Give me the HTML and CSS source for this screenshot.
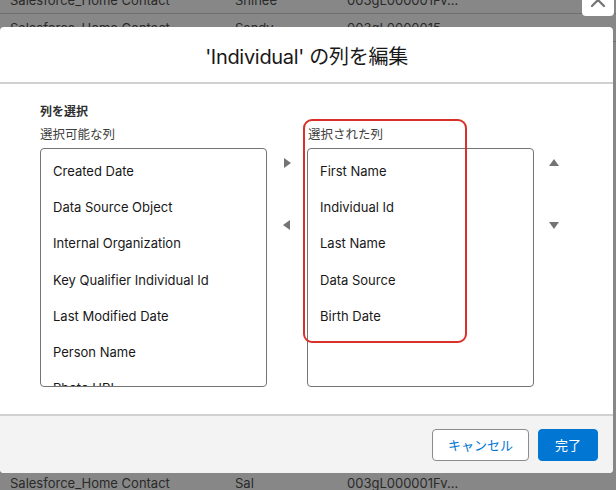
FILE: index.html
```html
<!DOCTYPE html>
<html lang="ja">
<head>
<meta charset="utf-8">
<title>Edit columns</title>
<link rel="stylesheet" href="styles.css">
</head>
<body>
<div class="backdrop">
  <div class="rows-top">
    <div class="row"><span>Salesforce_Home Contact</span><span>Shinee</span><span>003gL000001Fv...</span></div>
    <div class="row"><span>Salesforce_Home Contact</span><span>Sandy</span><span>003gL0000015...</span></div>
  </div>
  <div class="row"><span>Salesforce_Home Contact</span><span>Sal</span><span>003gL000001Fv...</span></div>
</div>

<div class="modal">
  <button class="close" aria-label="閉じる">
    <svg width="16" height="16" viewBox="0 0 16 16"><path d="M2 2 L14 14 M14 2 L2 14" stroke="#747474" stroke-width="2.2" stroke-linecap="round" fill="none"/></svg>
  </button>
  <header class="modal-header">
    <h2 class="title">'Individual' の列を編集</h2>
  </header>
  <div class="modal-body">
    <div class="group-label">列を選択</div>
    <div class="dueling">
      <div class="col">
        <div class="col-label">選択可能な列</div>
        <ul class="listbox">
          <li>Created Date</li>
          <li>Data Source Object</li>
          <li>Internal Organization</li>
          <li>Key Qualifier Individual Id</li>
          <li>Last Modified Date</li>
          <li>Person Name</li>
          <li>Photo URL</li>
        </ul>
      </div>
      <div class="move-buttons">
        <svg class="tri" width="8" height="10" viewBox="0 0 8 10"><polygon points="1,0 8,5 1,10" fill="#747474"/></svg>
        <svg class="tri second" width="8" height="10" viewBox="0 0 8 10"><polygon points="7,0 0,5 7,10" fill="#747474"/></svg>
      </div>
      <div class="col">
        <div class="col-label">選択された列</div>
        <ul class="listbox">
          <li>First Name</li>
          <li>Individual Id</li>
          <li>Last Name</li>
          <li>Data Source</li>
          <li>Birth Date</li>
        </ul>
      </div>
      <div class="order-buttons">
        <svg class="tri" width="10" height="8" viewBox="0 0 10 8"><polygon points="0,7 5,0 10,7" fill="#747474"/></svg>
        <svg class="tri second" width="10" height="8" viewBox="0 0 10 8"><polygon points="0,1 10,1 5,8" fill="#747474"/></svg>
      </div>
    </div>
    <div class="highlight"></div>
  </div>
  <footer class="modal-footer">
    <button class="btn btn-neutral">キャンセル</button>
    <button class="btn btn-brand">完了</button>
  </footer>
</div>
</body>
</html>
```

FILE: styles.css
```css
html, body {
  margin: 0;
  padding: 0;
}
body {
  width: 616px;
  height: 490px;
  overflow: hidden;
  position: relative;
  background: #878787;
  font-family: Inter, "Noto Sans CJK JP", sans-serif;
  color: #181818;
}

/* backdrop table */
.backdrop {
  margin-top: -14px;
  height: 511px;
  display: flex;
  flex-direction: column;
  justify-content: space-between;
}
.row {
  display: grid;
  grid-template-columns: 225px 112px 1fr;
  padding-left: 10px;
  height: 27px;
  align-items: center;
  font-size: 13px;
  color: #2a2a2a;
  border-bottom: 1px solid #6f6f6f;
  white-space: nowrap;
}

/* modal */
.modal {
  position: absolute;
  top: 27px;
  left: 0;
  width: 613px;
  background: #ffffff;
  border-radius: 4px;
}
.close {
  position: absolute;
  top: -43px;
  right: -1px;
  width: 32px;
  height: 32px;
  padding: 0;
  border: none;
  border-radius: 4px;
  background: #ffffff;
  display: flex;
  align-items: center;
  justify-content: center;
}
.modal-header {
  height: 57px;
  border-bottom: 2px solid #d0d0d0;
  display: flex;
  align-items: center;
  justify-content: center;
  padding-top: 2px;
  box-sizing: border-box;
}
.title {
  margin: 0;
  font-size: 20px;
  font-weight: 400;
  color: #181818;
  letter-spacing: -0.3px;
}
.modal-body {
  position: relative;
  height: 330px;
  box-sizing: border-box;
  padding: 19px 0 0 40px;
}
.group-label {
  font-size: 12px;
  font-weight: 700;
  line-height: 18px;
  color: #2e2e2e;
  margin-bottom: 5px;
}
.dueling {
  display: flex;
  align-items: flex-start;
}
.col {
  display: flex;
  flex-direction: column;
}
.col-label {
  font-size: 12.5px;
  line-height: 18px;
  color: #3e3e3c;
  margin-bottom: 4px;
}
.col:nth-child(3) .col-label {
  padding-left: 1px;
}
.listbox {
  list-style: none;
  margin: 0;
  padding: 4px 0 0 0;
  width: 227px;
  height: 239px;
  box-sizing: border-box;
  border: 1px solid #747474;
  border-radius: 4px;
  overflow: hidden;
}
.listbox li {
  height: 36.2px;
  line-height: 36.2px;
  padding-left: 12px;
  font-size: 13px;
  color: #181818;
  white-space: nowrap;
}
.move-buttons {
  width: 40px;
  display: flex;
  flex-direction: column;
  align-items: center;
  padding-top: 32px;
}
.move-buttons .tri {
  display: block;
}
.move-buttons .second {
  margin-top: 52px;
}
.order-buttons {
  display: flex;
  flex-direction: column;
  margin-left: 15px;
  padding-top: 33px;
}
.order-buttons .tri {
  display: block;
}
.order-buttons .second {
  margin-top: 54px;
}
.highlight {
  position: absolute;
  left: 303px;
  top: 35px;
  width: 164px;
  height: 224px;
  box-sizing: border-box;
  border: 2px solid #d9302a;
  border-radius: 9px;
  pointer-events: none;
}

/* footer */
.modal-footer {
  background: #f3f3f3;
  border-top: 2px solid #d0d0d0;
  border-radius: 0 0 4px 4px;
  height: 59px;
  box-sizing: border-box;
  padding: 13px 15px 0 0;
  display: flex;
  justify-content: flex-end;
  align-items: flex-start;
  gap: 9px;
}
.btn {
  height: 32px;
  padding: 0;
  border-radius: 4px;
  font-family: Inter, "Noto Sans CJK JP", sans-serif;
  font-size: 13px;
  line-height: 30px;
  box-sizing: border-box;
  white-space: nowrap;
  text-align: center;
}
.btn-neutral {
  background: #ffffff;
  border: 1px solid #8c8c8c;
  color: #0176d3;
  width: 97px;
}
.btn-brand {
  background: #0176d3;
  border: 1px solid #0176d3;
  color: #ffffff;
  width: 60px;
}
```
